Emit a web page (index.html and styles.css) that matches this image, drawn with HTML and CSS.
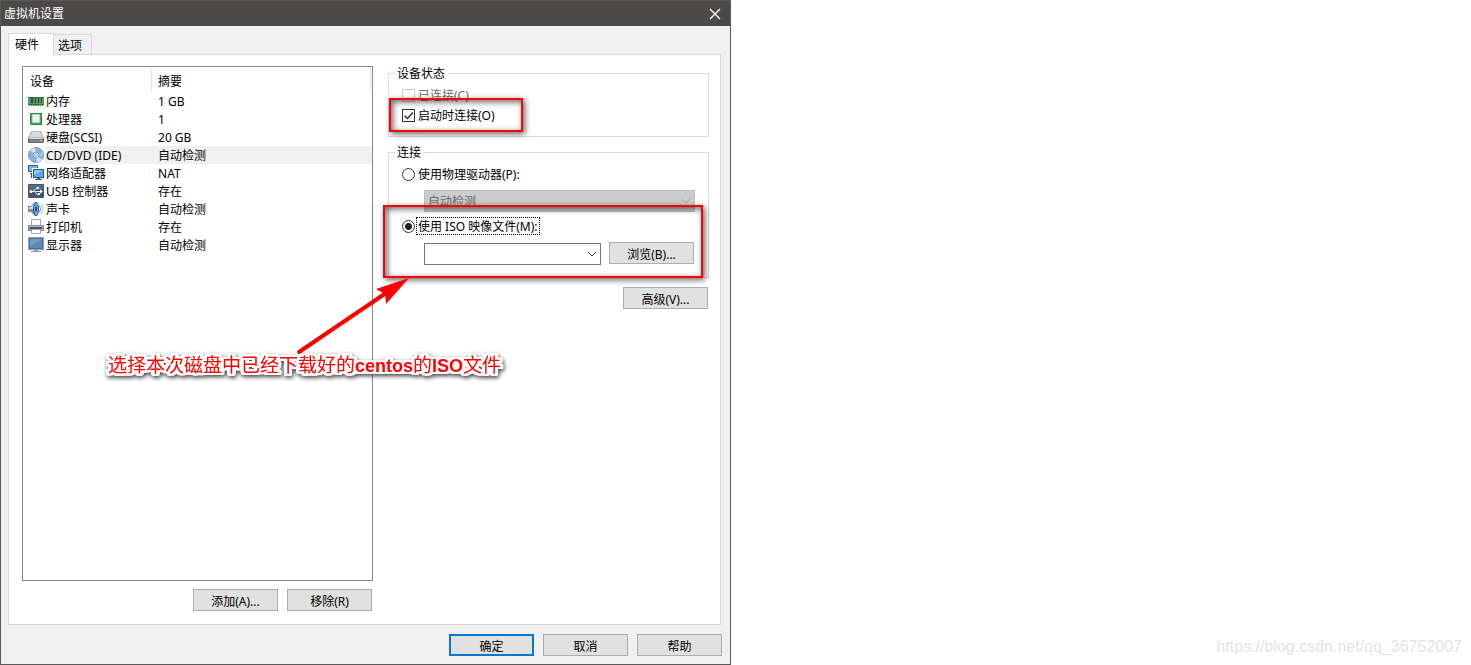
FILE: index.html
```
<!DOCTYPE html>
<html lang="zh-CN">
<head>
	<meta charset="utf-8">
	<title>虚拟机设置</title>
	<link rel="stylesheet" href="styles.css">
</head>
<body>
<div class="dialog">
	<div class="titlebar">
		<h1>虚拟机设置</h1>
		<button type="button" class="close" aria-label="关闭">
			<svg width="12" height="12" viewBox="0 0 12 12"><path d="M1 1l10 10M11 1L1 11" stroke="#fff" stroke-width="1.3" fill="none"/></svg>
		</button>
	</div>

	<div class="tabs">
		<button type="button" class="tab active">硬件</button>
		<button type="button" class="tab">选项</button>
	</div>

	<div class="panel">
		<div class="devices">
			<div class="list">
				<table>
					<colgroup><col class="col-icon"><col class="col-name"><col></colgroup>
					<thead>
						<tr><th colspan="2">设备</th><th class="summary">摘要</th></tr>
					</thead>
					<tbody>
						<tr>
							<td class="icon"><svg width="16" height="16" viewBox="0 0 16 16"><path d="M0 4h16v8h-1v1H1v-1H0z" fill="#3fa85c"/><path d="M0 4h16v1H0zM0 11h16v1H0z" fill="#1d7a38"/><path d="M2 5h3v5H2zM6 5h2v5H6zM9 5h2v5H9zM12 5h2v5h-2z" fill="#333d3b"/><path d="M2 5h1v5H2zM6 5h1v5H6zM9 5h1v5H9zM12 5h1v5h-1z" fill="#78857e"/><path d="M2 12h1v1H2zM4 12h1v1H4zM6 12h1v1H6zM9 12h1v1H9zM11 12h1v1h-1zM13 12h1v1h-1z" fill="#e7c94c"/></svg></td>
							<td>内存</td><td class="summary">1 GB</td>
						</tr>
						<tr>
							<td class="icon"><svg width="16" height="16" viewBox="0 0 16 16"><path d="M2 2h12v12H2z" fill="#248a43"/><path d="M3 3h10v10H3z" fill="#43ad61"/><path d="M4 3h8v9H4z" fill="#c3cdc7"/><path d="M5 4h6v7H5z" fill="#f0f2f0"/><path d="M2 13h1v1H2z" fill="#e7c94c"/></svg></td>
							<td>处理器</td><td class="summary">1</td>
						</tr>
						<tr>
							<td class="icon"><svg width="16" height="16" viewBox="0 0 16 16"><path d="M3 2h10l3 7H0z" fill="#b4bac2"/><path d="M4 3h8l2 5H2z" fill="#d9dde1"/><path d="M0 9h16v4q0 1-1 1H1q-1 0-1-1z" fill="#5d6876"/><path d="M1 9h14v1H1z" fill="#e8ebee"/><path d="M1 11h14v2H1z" fill="#818b97"/><path d="M12 11h2v1h-2z" fill="#7cf06e"/></svg></td>
							<td>硬盘(SCSI)</td><td class="summary">20 GB</td>
						</tr>
						<tr class="selected">
							<td class="icon"><svg width="16" height="16" viewBox="0 0 16 16"><circle cx="8" cy="8" r="7.5" fill="#8db4d8" stroke="#6f98be"/><path d="M8 8L2 3.500A7.500 7.500 0 0 1 7 .6zM8 8l6 4.500a7.500 7.500 0 0 1-5 2.900z" fill="#d3e5f4"/><path d="M8 8l7-2.500v4z" fill="#a9cae6"/><circle cx="8" cy="8" r="3" fill="#d7e6f2" stroke="#7096bb" stroke-width=".8"/><circle cx="8" cy="8" r="1.300" fill="#fff" stroke="#7096bb" stroke-width=".6"/></svg></td>
							<td>CD/DVD (IDE)</td><td class="summary">自动检测</td>
						</tr>
						<tr>
							<td class="icon"><svg width="16" height="16" viewBox="0 0 16 16"><path d="M0 0h10v7H0z" fill="#2f6294"/><path d="M1 1h8v5H1z" fill="#75b5e8"/><path d="M2 8h2v4h3v1H3V9H2z" fill="#42505f"/><path d="M4 3h12v10H4z" fill="#fff"/><path d="M5 4h11v9H5z" fill="#24588b"/><path d="M6 5h9v7H6z" fill="#5fa9e3"/><path d="M6 5h9L6 10z" fill="#91c8ef"/><path d="M9 13h3v1h2v1H7v-1h2z" fill="#48596a"/></svg></td>
							<td>网络适配器</td><td class="summary">NAT</td>
						</tr>
						<tr>
							<td class="icon"><svg width="16" height="16" viewBox="0 0 16 16"><rect y="1" width="16" height="14" rx="1" fill="#42566d"/><path d="M1 2h14v5H1z" fill="#566b82"/><path d="M2 8.500h11M5 8.500l3-3h2M7 8.500l2 3h2" stroke="#dfe5eb" fill="none"/><circle cx="3" cy="8.500" r="1.500" fill="#fff"/><path d="M12 6.500l3 2-3 2zM9 4h2v2H9zM10 10h2v2h-2z" fill="#fff"/></svg></td>
							<td>USB 控制器</td><td class="summary">存在</td>
						</tr>
						<tr>
							<td class="icon"><svg width="16" height="16" viewBox="0 0 16 16"><path d="M0 5h3l4-4h2v14H7l-4-4H0z" fill="#6d93b5"/><path d="M1 6h2l4-4v6H1z" fill="#cfe2f0"/><ellipse cx="8" cy="8" rx="2.500" ry="6.800" fill="#6fa9d8" stroke="#2f5b86"/><ellipse cx="8" cy="8" rx="1" ry="3" fill="#24517e"/><path d="M11.500 4.500q2 3.500 0 7" stroke="#4c97d2" fill="none"/><path d="M13.500 3q3 5 0 10" stroke="#9cc7e8" fill="none"/></svg></td>
							<td>声卡</td><td class="summary">自动检测</td>
						</tr>
						<tr>
							<td class="icon"><svg width="16" height="16" viewBox="0 0 16 16"><path d="M3.500 .5h9v6h-9z" fill="#fafafb" stroke="#a6aab2"/><path d="M0 6h16v6H0z" fill="#868c9b"/><path d="M1 7h14v1H1z" fill="#b9bdc8"/><path d="M2 8h12v2H2z" fill="#4b5261"/><path d="M13 10h2v1h-2z" fill="#7cec6f"/><path d="M3.500 10.500h9v4h-9z" fill="#fff" stroke="#a6aab2"/></svg></td>
							<td>打印机</td><td class="summary">存在</td>
						</tr>
						<tr>
							<td class="icon"><svg width="16" height="16" viewBox="0 0 16 16"><path d="M0 0h16v13H0z" fill="#8fa3b8"/><path d="M1 1h14v11H1z" fill="#4a6f98"/><path d="M2 2h12v9H2z" fill="#5f8ab5"/><path d="M2 2h12L2 9z" fill="#779dc4"/><path d="M6 13h4v1h3v1H3v-1h3z" fill="#8b99a8"/></svg></td>
							<td>显示器</td><td class="summary">自动检测</td>
						</tr>
					</tbody>
				</table>
			</div>
			<div class="buttons">
				<button type="button" class="btn">添加(A)...</button>
				<button type="button" class="btn">移除(R)</button>
			</div>
		</div>

		<form class="settings">
			<fieldset>
				<legend>设备状态</legend>
				<label class="option disabled"><input type="checkbox" disabled><span>已连接(C)</span></label>
				<label class="option"><input type="checkbox" checked><span>启动时连接(O)</span></label>
			</fieldset>

			<fieldset>
				<legend>连接</legend>
				<label class="option"><input type="radio" name="source"><span>使用物理驱动器(P):</span></label>
				<div class="source">
					<select class="combo" aria-label="物理驱动器" disabled><option>自动检测</option></select>
				</div>
				<label class="option"><input type="radio" name="source" checked><span class="focus">使用 ISO 映像文件(M):</span></label>
				<div class="source">
					<select class="combo" aria-label="ISO 映像文件"><option></option></select>
					<button type="button" class="btn">浏览(B)...</button>
				</div>
			</fieldset>

			<div class="buttons">
				<button type="button" class="btn">高级(V)...</button>
			</div>
		</form>
	</div>

	<div class="buttons footer">
		<button type="button" class="btn default">确定</button>
		<button type="button" class="btn">取消</button>
		<button type="button" class="btn">帮助</button>
	</div>

	<!-- annotations over the dialog -->
	<div class="mark mark-connect"></div>
	<div class="mark mark-iso"></div>
	<p class="note">选择本次磁盘中已经下载好的<b>centos</b>的<b>ISO</b>文件</p>
	<svg class="arrow" width="120" height="80" viewBox="0 0 120 80"><path d="M9 76L96 17" stroke="#f00" stroke-width="4" stroke-linecap="round"/><path d="M119 2L96 28L95 18L86 13z" fill="#f00"/></svg>
</div>
<div class="watermark">https://blog.csdn.net/qq_36752007</div>
</body>
</html>
```
FILE: styles.css
```
* { box-sizing: border-box; }
body {
    margin: 0;
    background: #fff;
    color: #000;
    font: 12px/14px "Noto Sans", "Noto Sans CJK SC", sans-serif;
}
button, select, input { font: inherit; color: inherit; margin: 0; }

.dialog {
    position: relative;
    display: flex;
    flex-direction: column;
    max-width: 731px;
    min-height: 100vh;
    background: #f0f0f0;
    border: 1px solid #5a5957;
}
.titlebar {
    display: flex;
    align-items: center;
    justify-content: space-between;
    height: 25px;
    padding: 0 9px 0 3px;
    background: #4c4a48;
    color: #fff;
}
.titlebar h1 { margin: 0; font-size: 12px; font-weight: normal; }
.close { display: flex; padding: 0; border: 0; background: none; }

/* tabs */
.tabs {
    display: flex;
    align-items: flex-end;
    margin: 7px 9px 0 7px;
}
.tab {
    height: 20px;
    padding: 2px 9px 0 4px;
    border: 1px solid #d9d9d9;
    border-left: 0;
    border-bottom: 0;
    background: #f0f0f0;
}
.tab.active {
    position: relative;
    z-index: 1;
    height: 22px;
    margin-bottom: -1px;
    padding: 0 14px 0 6px;
    border-left: 1px solid #d9d9d9;
    background: #fff;
}
.panel {
    flex: 1;
    display: flex;
    gap: 15px;
    margin: 0 9px 0 7px;
    padding: 11px 11px 13px 13px;
    border: 1px solid #d9d9d9;
    background: #fff;
}

/* device list */
.devices { flex: 351; display: flex; flex-direction: column; }
.list { flex: 1; border: 1px solid #828790; }
.list table { width: 100%; border-collapse: collapse; table-layout: fixed; }
.col-icon { width: 22px; }
.col-name { width: 106px; }
.list th {
    height: 25px;
    padding: 4px 0 0 7px;
    text-align: left;
    font-weight: normal;
}
.list th.summary {
    background: linear-gradient(#e5e5e5, #e5e5e5) 0 1px / 1px 24px no-repeat,
                linear-gradient(#e5e5e5, #e5e5e5) right 1px top 1px / 1px 24px no-repeat;
}
.list td { height: 18px; padding: 2px 0 0 1px; line-height: 16px; white-space: nowrap; }
.list td.icon { padding: 0 0 0 5px; }
.list .icon svg { display: block; }
.list .summary { padding-left: 7px; }
.selected td + td { background: #f0f0f0; }

/* buttons */
.buttons { display: flex; justify-content: flex-end; gap: 9px; }
.devices .buttons { margin: 8px 1px 0 0; }
.settings .buttons { margin: 9px 1px 0 0; }
.footer { padding: 9px 8px 8px; }
.btn {
    width: 85px;
    height: 22px;
    padding: 3px 0 0;
    border: 1px solid #adadad;
    background: #e1e1e1;
}
.btn.default { border: 2px solid #0078d7; }

/* settings */
.settings { flex: 321; margin-top: -1px; }
fieldset {
    margin: 0 0 7px;
    padding: 4px 13px 11px;
    border: 1px solid #dcdcdc;
}
fieldset legend { margin-left: -7px; padding: 2px 2px 0; }
.option { display: flex; align-items: center; height: 20px; gap: 2px; }
.option.disabled { color: #6d6d6d; }
.option span { padding: 2px 1px 0; }
.option .focus { outline: 1px dotted #000; }
input[type=checkbox], input[type=radio] {
    appearance: none;
    width: 13px;
    height: 13px;
    border: 1px solid #333;
    background: #fff;
}
input[type=radio] { border-radius: 50%; }
input[type=radio]:checked { background: radial-gradient(#222 3px, #fff 4px); }
input[type=checkbox]:checked {
    background: url("data:image/svg+xml,%3Csvg xmlns='http://www.w3.org/2000/svg' viewBox='0 0 11 11'%3E%3Cpath d='M1.500 5.500l3 3 5.500-6' fill='none' stroke='%23222' stroke-width='1.300'/%3E%3C/svg%3E");
}
input[type=checkbox]:disabled { border-color: #ccc; }
.source { display: flex; gap: 8px; margin: 6px 0 4px 22px; }
.source .btn { margin: -1px 1px 1px 0; }
.source + .option + .source { margin: 7px 0 1px 22px; }
.combo {
    appearance: none;
    flex: 1;
    min-width: 0;
    height: 22px;
    padding: 2px 3px 0;
    border: 1px solid #777;
    border-radius: 0;
    background: #fff url("data:image/svg+xml,%3Csvg xmlns='http://www.w3.org/2000/svg' width='10' height='6'%3E%3Cpath d='M1 1l4 4 4-4' fill='none' stroke='%23444'/%3E%3C/svg%3E") right 3px center no-repeat;
}
.combo:disabled {
    border-color: #bfbfbf;
    background-color: #ccc;
    background-image: url("data:image/svg+xml,%3Csvg xmlns='http://www.w3.org/2000/svg' width='10' height='6'%3E%3Cpath d='M1 1l4 4 4-4' fill='none' stroke='%23aaa'/%3E%3C/svg%3E");
    color: #6d6d6d;
    opacity: 1;
}

/* annotations */
.mark {
    position: absolute;
    border: 2px solid #f00;
    box-shadow: 2px 2px 6px rgba(0, 0, 0, .6), inset 2px 2px 6px rgba(0, 0, 0, .6);
    pointer-events: none;
}
.mark-connect { left: 388px; top: 97px; width: 134px; height: 34px; }
.mark-iso { left: 382px; top: 204px; width: 320px; height: 73px; }
.arrow { position: absolute; left: 289px; top: 275px; }
.note {
    position: absolute;
    left: 107px;
    top: 353px;
    margin: 0;
    color: #f00;
    font: 19px/24px "Liberation Sans", "Noto Sans CJK SC", sans-serif;
    white-space: nowrap;
    filter: drop-shadow(1px 0 #fff) drop-shadow(-1px 0 #fff)
            drop-shadow(0 1px #fff) drop-shadow(0 -1px #fff)
            drop-shadow(2px 0 #fff) drop-shadow(-2px 0 #fff)
            drop-shadow(0 1px #fff) drop-shadow(0 -1px #fff)
            drop-shadow(1px 2px 2px #444);
}
.note b { font-size: 18px; }
.watermark {
    position: absolute;
    right: 9px;
    bottom: 9px;
    color: #e4e4e4;
    font: 16px/18px "Liberation Sans", sans-serif;
}
```
